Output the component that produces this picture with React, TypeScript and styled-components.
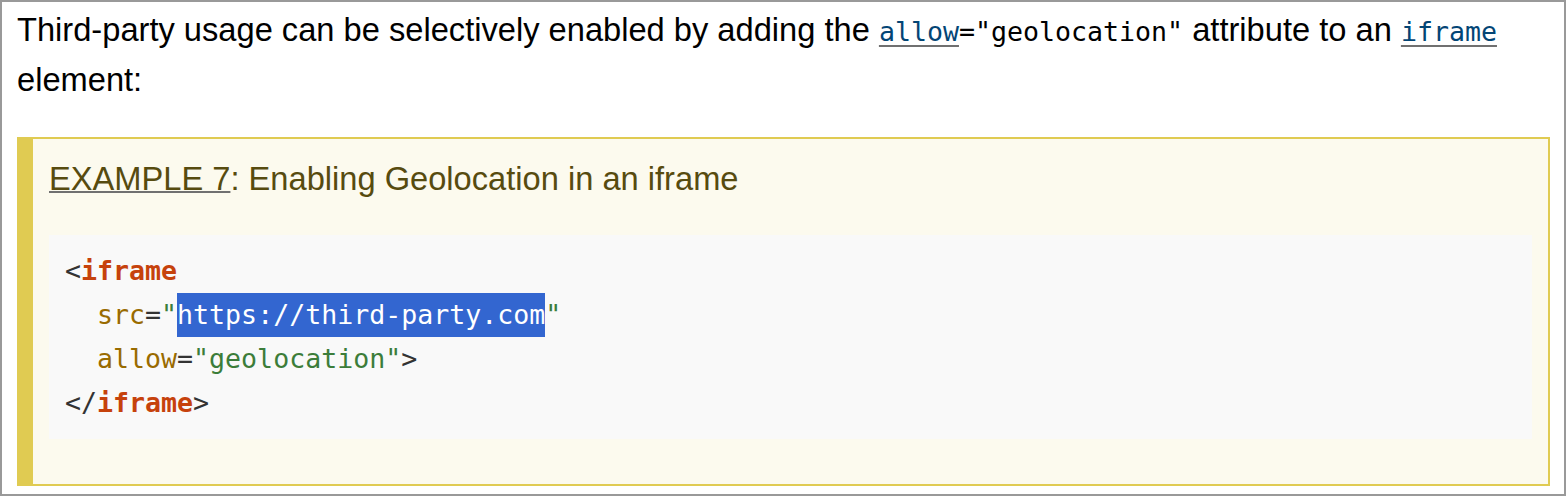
import React from "react";
import styled, { createGlobalStyle } from "styled-components";

const Global = createGlobalStyle`
  html, body { margin: 0; padding: 0; background: #fff; }
  body { font-family: "Liberation Sans", Arial, sans-serif; }
`;

const Frame = styled.div`
  box-sizing: border-box;
  width: 1566px;
  height: 496px;
  border: 2px solid #999999;
  padding: 4px 14px 0 15px;
  overflow: hidden;
  background: #fff;
`;

const Para = styled.p`
  margin: 0 0 33px 0;
  font-size: 32.65px;
  line-height: 48px;
  color: #000;
`;

const InlineCode = styled.code`
  font-family: "DejaVu Sans Mono", monospace;
  font-size: 26.6px;
  color: #000;
`;

const CodeLink = styled.a`
  color: #034575;
  text-decoration: underline;
  text-decoration-color: #707070;
  text-decoration-thickness: 2px;
  text-underline-offset: 4px;
`;

const Example = styled.div`
  background: #fcfaee;
  border: 2px solid #e0cb52;
  border-left: 16px solid #e0cb52;
  padding: 16px;
`;

const Title = styled.div`
  font-size: 32.65px;
  line-height: 48px;
  color: #574b0f;
  margin-bottom: 32px;
`;

const TitleLink = styled.a`
  color: #574b0f;
  text-decoration: underline;
  text-decoration-color: #707070;
  text-decoration-thickness: 2px;
`;

const Pre = styled.pre`
  margin: 0 0 29px 0;
  background: #f9f9f9;
  padding: 14px 16px;
  font-family: "DejaVu Sans Mono", monospace;
  font-size: 26.6px;
  line-height: 44px;
  color: #333;
  white-space: pre;
`;

const CodeLine = styled.div<{ $indent?: number }>`
  height: 44px;
  padding-left: ${(p) => (p.$indent ?? 0) * 16}px;
`;

const Tag = styled.span`
  color: #c6420c;
  font-weight: bold;
`;

const Attr = styled.span`
  color: #996b00;
`;

const Str = styled.span`
  color: #3c7d3a;
`;

const Selected = styled.span`
  display: inline-block;
  background: #3366d0;
  color: #fff;
  vertical-align: top;
  height: 44px;
`;

export default function App() {
  return (
    <>
      <Global />
      <Frame>
        <Para>
          Third-party usage can be selectively enabled by adding the{" "}
          <InlineCode>
            <CodeLink href="#">allow</CodeLink>="geolocation"
          </InlineCode>{" "}
          attribute to an{" "}
          <InlineCode>
            <CodeLink href="#">iframe</CodeLink>
          </InlineCode>{" "}
          element:
        </Para>
        <Example>
          <Title>
            <TitleLink href="#">EXAMPLE 7</TitleLink>: Enabling Geolocation in an iframe
          </Title>
          <Pre>
            <CodeLine>
              {"<"}
              <Tag>iframe</Tag>
            </CodeLine>
            <CodeLine $indent={2}>
              <Attr>src</Attr>
              {"="}
              <Str>"</Str>
              <Selected>https://third-party.com</Selected>
              <Str>"</Str>
            </CodeLine>
            <CodeLine $indent={2}>
              <Attr>allow</Attr>
              {"="}
              <Str>"geolocation"</Str>
              {">"}
            </CodeLine>
            <CodeLine>
              {"</"}
              <Tag>iframe</Tag>
              {">"}
            </CodeLine>
          </Pre>
        </Example>
      </Frame>
    </>
  );
}
